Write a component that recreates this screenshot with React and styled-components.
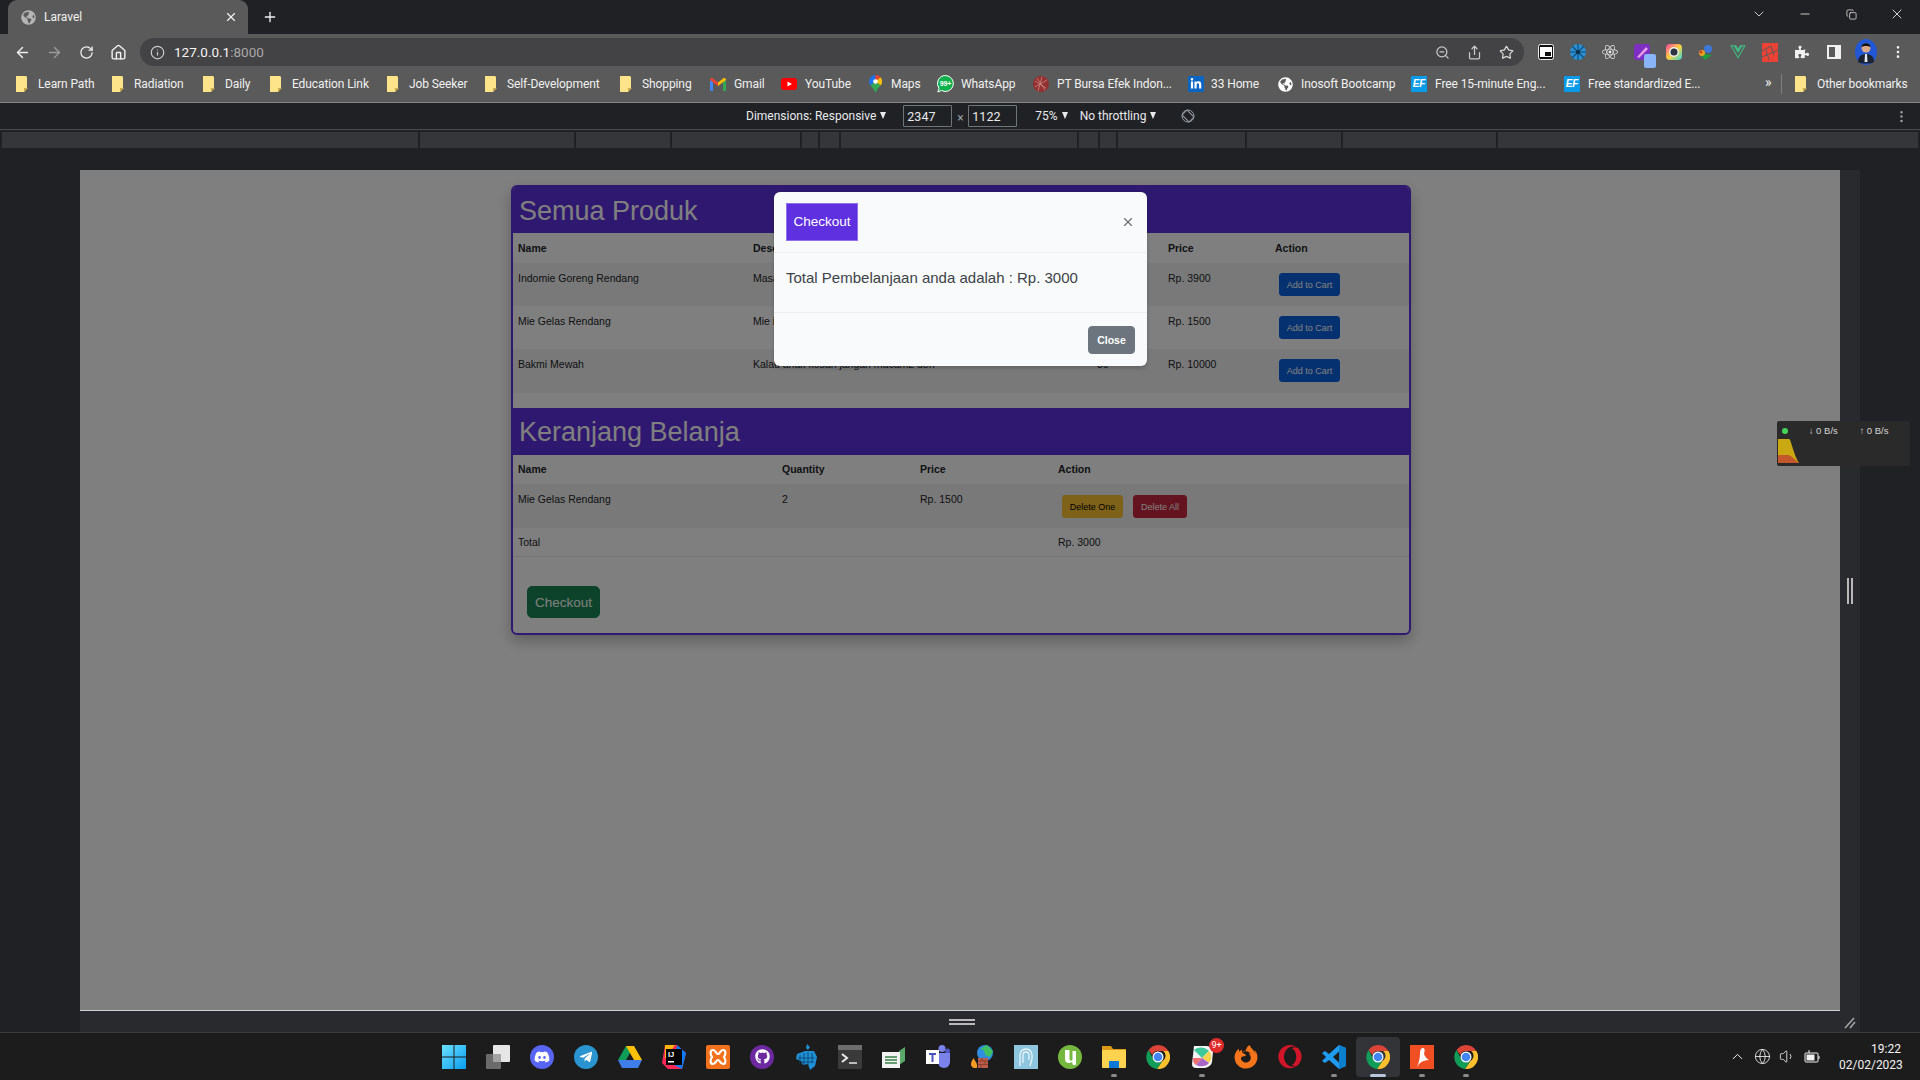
import React from 'react';
import styled, { createGlobalStyle } from 'styled-components';
import {
  FaDiscord, FaTelegramPlane, FaGithub, FaLinkedinIn,
  FaVuejs, FaFirefoxBrowser, FaOpera, FaReact, FaPuzzlePiece, FaGlobeAmericas,
} from 'react-icons/fa';
import {
  ArrowLeft, ArrowRight, RotateCw, Home, Info, ZoomOut, Share, Star, X, Plus,
  ChevronDown, ChevronUp, Minus, Copy, MoreVertical, Volume1, Globe,
} from 'lucide-react';

const GlobalStyle = createGlobalStyle`
  html, body { margin: 0; padding: 0; background: #202124; }
  * { box-sizing: border-box; }
`;

const Screen = styled.div`
  position: relative;
  width: 1920px;
  height: 1080px;
  overflow: hidden;
  display: flex;
  flex-direction: column;
  background: #202124;
  color: #e8eaed;
  font-family: Roboto, "Noto Sans", sans-serif;
  font-size: 12px;
`;

/* browser chrome */
const TabStrip = styled.div`
  height: 34px;
  display: flex;
  background: #202124;
  padding-left: 8px;
`;

const Tab = styled.div`
  width: 240px;
  display: flex;
  align-items: center;
  gap: 8px;
  padding: 0 10px 0 13px;
  background: #5a5a5a;
  border-radius: 9px 9px 0 0;
  color: #f1f1f1;
`;

const TabTitle = styled.span`
  flex: 1;
`;

const NewTab = styled.div`
  width: 44px;
  display: flex;
  align-items: center;
  justify-content: center;
  color: #f1f1f1;
`;

const WindowButtons = styled.div`
  margin-left: auto;
  display: flex;
  height: 28px;
`;

const WindowButton = styled.div`
  width: 46px;
  display: flex;
  align-items: center;
  justify-content: center;
  color: #f0f0f0;
`;

const Toolbar = styled.div`
  height: 32px;
  padding: 4px 6px 0 6px;
  display: flex;
  align-items: center;
  background: #5a5a5a;
`;

const ToolButton = styled.div`
  width: 32px;
  height: 28px;
  flex: none;
  display: flex;
  align-items: center;
  justify-content: center;
  color: ${(p) => p.$color || '#f1f1f1'};
`;

const DeviceMenu = styled(ToolButton)`
  margin-left: auto;
  margin-right: 3px;
`;

const AddressBar = styled.div`
  width: 1384px;
  height: 28px;
  margin: 0 6px 0 6px;
  padding: 0 2px 0 10px;
  flex: none;
  display: flex;
  align-items: center;
  background: #434244;
  border-radius: 14px;
`;

const Url = styled.span`
  flex: 1;
  margin-left: 9px;
  font-size: 13.5px;
  color: #f4f4f4;
  span { color: #a9a9a9; }
`;

const BookmarkBar = styled.div`
  height: 37px;
  padding-left: 16px;
  display: flex;
  align-items: center;
  background: #5a5a5a;
  border-bottom: 1px solid #858585;
  letter-spacing: -0.1px;
`;

const Bookmark = styled.div`
  width: ${(p) => p.$w}px;
  flex: none;
  display: flex;
  align-items: center;
  gap: ${(p) => p.$gap || 8}px;
  margin-left: ${(p) => p.$ml || 0}px;
  color: #f1f1f1;
  white-space: nowrap;
`;

const BookmarkIcon = styled.span`
  width: ${(p) => p.$w || 16}px;
  height: 16px;
  flex: none;
  display: flex;
  align-items: center;
  justify-content: center;
  font-size: ${(p) => p.$size || 14}px;
  border-radius: 1px;
  background: ${(p) => p.$bg || 'none'};
  color: #fff;
`;

const EfTile = styled.span`
  width: 16px;
  height: 16px;
  flex: none;
  background: #0a9be8;
  color: #fff;
  font: italic bold 10px "Liberation Sans", sans-serif;
  text-align: center;
  line-height: 16px;
`;

const MoreMarks = styled.div`
  margin-left: 3px;
  width: 18px;
  height: 20px;
  font-size: 14px;
  color: #eee;
  border-right: 1px solid #808080;
`;

const DeviceBar = styled.div`
  height: 27px;
  padding-left: 746px;
  display: flex;
  align-items: center;
  border-bottom: 1px solid #494c50;
  color: #e8eaed;
  white-space: nowrap;
`;

const Caret = styled.span`
  width: 0;
  height: 0;
  margin: 0 ${(p) => p.$after || 0}px 2px 4px;
  border-left: 3.5px solid transparent;
  border-right: 3.5px solid transparent;
  border-top: 7px solid #e8eaed;
`;

const SizeInput = styled.div`
  width: 49px;
  height: 22px;
  padding: 3px 0 0 3px;
  border: 1px solid #70757a;
  border-radius: 1px;
  font-size: 12.5px;
`;

const Times = styled.span`
  width: 16px;
  text-align: center;
  color: #9aa0a6;
  padding-top: 3px;
`;

const ZoomLabel = styled.span`
  margin-left: 18px;
`;

const MediaBar = styled.div`
  height: 40px;
  padding: 2px 2px 22px 2px;
  display: flex;
  gap: 2px;
`;

const MediaSegment = styled.div`
  flex: ${(p) => (p.$w ? `0 0 ${p.$w}px` : '1')};
  background: #35363a;
`;

/* emulated viewport */
const Stage = styled.div`
  height: 841px;
  padding-left: 80px;
  display: flex;
`;

const Viewport = styled.div`
  position: relative;
  width: 1760px;
  padding-top: 15px;
  background: #ffffff;
  font-family: "Liberation Sans", Arial, sans-serif;
  font-size: 10.5px;
  color: #212529;
`;

const Card = styled.div`
  width: 900px;
  height: 450px;
  margin-left: 431px;
  border: 2px solid #5e30e0;
  border-radius: 6px;
  box-shadow: 0 6px 14px rgba(0, 0, 0, 0.25);
  overflow: hidden;
`;

const SectionTitle = styled.h2`
  height: ${(p) => p.$h}px;
  margin: 0;
  padding: 2px 0 0 6px;
  display: flex;
  align-items: center;
  background: #5e30e0;
  color: #fff;
  font-size: 27px;
  font-weight: 400;
`;

const ProductList = styled.div`
  height: 175px;
`;

const Row = styled.div`
  display: grid;
  grid-template-columns: ${(p) => p.$cols};
  height: ${(p) => p.$h}px;
  padding-top: ${(p) => p.$pt}px;
  background: ${(p) => (p.$striped ? 'rgba(0, 0, 0, 0.05)' : 'transparent')};
  border-bottom: ${(p) => (p.$line ? '1px solid #e6e6e6' : 'none')};
`;

const Cell = styled.div`
  padding-left: 5px;
  white-space: nowrap;
  overflow: hidden;
  font-weight: ${(p) => (p.$head ? 700 : 400)};
`;

const ActionCell = styled.div`
  margin-top: ${(p) => p.$mt}px;
  padding-left: 9px;
  display: flex;
  gap: 10px;
`;

const SmallButton = styled.button`
  width: ${(p) => p.$w}px;
  height: 23px;
  padding: 0;
  border: 1px solid ${(p) => p.$bg};
  border-radius: 3px;
  background: ${(p) => p.$bg};
  color: ${(p) => p.$fg};
  font: 9px "Liberation Sans", Arial, sans-serif;
`;

const CheckoutButton = styled.button`
  width: 73px;
  height: 32px;
  margin: 29px 0 0 14px;
  padding: 0;
  border: 1px solid #198754;
  border-radius: 5px;
  background: #198754;
  color: #fff;
  font: 13.5px "Liberation Sans", Arial, sans-serif;
`;

/* dialog over the page */
const Backdrop = styled.div`
  position: absolute;
  inset: 0;
  padding-top: 22px;
  background: rgba(0, 0, 0, 0.5);
  border-bottom: 1px solid #d0d0d0;
`;

const Modal = styled.div`
  width: 373px;
  height: 174px;
  margin-left: 694px;
  display: flex;
  flex-direction: column;
  background: #f8fafc;
  border-radius: 6px;
  box-shadow: 0 2px 4px rgba(0, 0, 0, 0.2);
`;

const ModalHeader = styled.div`
  height: 61px;
  padding: 11px 12px 0 12px;
  display: flex;
  justify-content: space-between;
  border-bottom: 1px solid #eceef0;
`;

const ModalTitle = styled.div`
  width: 72px;
  height: 38px;
  padding-bottom: 2px;
  display: flex;
  align-items: center;
  justify-content: center;
  background: #5e30e0;
  border: 1px solid #8f70ea;
  color: #fff;
  font-size: 13.5px;
`;

const ModalClose = styled.div`
  margin-top: 12px;
  color: #6c6f73;
  line-height: 0;
`;

const ModalBody = styled.div`
  height: 60px;
  padding: 16px 12px 0 12px;
  border-bottom: 1px solid #eceef0;
  color: #3d4246;
  font-size: 15px;
`;

const ModalFooter = styled.div`
  padding: 13px 12px 0 0;
  display: flex;
  justify-content: flex-end;
`;

const CloseButton = styled.button`
  width: 47px;
  height: 28px;
  padding: 0;
  border: 1px solid #6c757d;
  border-radius: 4px;
  background: #6c757d;
  color: #fff;
  font: bold 10.5px "Liberation Sans", Arial, sans-serif;
`;

const Rail = styled.div`
  width: 20px;
  display: flex;
  align-items: center;
  justify-content: center;
  gap: 2px;
  background: #292a2d;
`;

const RailGrip = styled.span`
  width: 2px;
  height: 26px;
  background: #b9b9b9;
`;

const BottomStrip = styled.div`
  height: 21px;
  margin: 0 60px 0 80px;
  display: flex;
  align-items: center;
  justify-content: space-between;
  padding-left: 869px;
  background: #292a2d;
`;

const BottomGrip = styled.div`
  width: 26px;
  height: 6px;
  border-top: 2px solid #b9b9b9;
  border-bottom: 2px solid #b9b9b9;
`;

const CornerGrip = styled.svg`
  margin-right: 4px;
  margin-top: 2px;
`;

/* windows taskbar */
const Taskbar = styled.div`
  height: 48px;
  padding-left: 432px;
  display: flex;
  align-items: center;
  background: #1c1c1c;
  border-top: 1px solid #3b3b3b;
`;

const TaskItem = styled.div`
  position: relative;
  width: 44px;
  height: 40px;
  flex: none;
  display: flex;
  align-items: center;
  justify-content: center;
  background: ${(p) => (p.$active ? '#333437' : 'none')};
  border-radius: 4px;
  &::after {
    content: '';
    display: ${(p) => (p.$dot || p.$active ? 'block' : 'none')};
    position: absolute;
    left: 50%;
    bottom: 0;
    width: ${(p) => (p.$active ? 16 : 6)}px;
    height: 3px;
    margin-left: ${(p) => (p.$active ? -8 : -3)}px;
    border-radius: 2px;
    background: ${(p) => (p.$active ? '#b7c6dc' : '#8a8a8a')};
  }
`;

const TaskTile = styled.span`
  width: 24px;
  height: 24px;
  display: flex;
  align-items: center;
  justify-content: center;
  font-size: ${(p) => p.$size || 16}px;
  border-radius: 50%;
  background: ${(p) => p.$bg || 'none'};
  color: ${(p) => p.$color || '#fff'};
`;

const Badge = styled.span`
  position: absolute;
  top: 1px;
  right: 0;
  width: 15px;
  height: 15px;
  border-radius: 50%;
  background: #e02b2b;
  color: #fff;
  font-size: 9px;
  line-height: 15px;
  text-align: center;
`;

const Tray = styled.div`
  margin-left: auto;
  padding-right: 19px;
  display: flex;
  align-items: center;
  color: #f1f1f1;
`;

const TrayIcon = styled.span`
  width: 25px;
  display: flex;
  justify-content: center;
`;

const Clock = styled.div`
  margin-left: 14px;
  width: 62px;
  text-align: right;
  line-height: 16px;
  font-size: 12px;
`;

/* network meter floating over everything */
const NetMeter = styled.div`
  position: absolute;
  left: 1777px;
  top: 421px;
  width: 133px;
  height: 45px;
  background: #2a2a2a;
  border-radius: 2px;
  font-family: "Liberation Sans", sans-serif;
  font-size: 9.5px;
  color: #d6d6d6;
`;

const NetHead = styled.div`
  height: 18px;
  padding: 1px 0 0 5px;
  display: flex;
  align-items: center;
`;

const NetDot = styled.span`
  width: 6px;
  height: 6px;
  margin-right: 21px;
  border-radius: 50%;
  background: #45d35a;
`;

const NetRate = styled.span`
  width: 53px;
  display: flex;
  align-items: center;
  gap: 3px;
`;

const NetChartSvg = styled.svg`
  display: block;
  margin-left: 1px;
`;

const PenWrap = styled.span`
  position: relative;
  display: inline-flex;
`;

const PenTile = styled.svg`
  position: absolute;
  left: 10px;
  top: 10px;
`;

const MEDIA_WIDTHS = [416, 154, 94, 128, 16, 19, 236, 19, 16, 127, 94, 153, 0];

const PRODUCT_COLS = '235px 344px 71px 107px 1fr';
const CART_COLS = '264px 138px 138px 1fr';

const PRODUCTS = [
  { name: 'Indomie Goreng Rendang', desc: 'Masakan Indonesia', qty: 12, price: 'Rp. 3900', h: 43 },
  { name: 'Mie Gelas Rendang', desc: 'Mie instan', qty: 20, price: 'Rp. 1500', h: 43 },
  { name: 'Bakmi Mewah', desc: 'Kalau anak kosan jangan macam2 deh', qty: 30, price: 'Rp. 10000', h: 44 },
];

const BOOKMARKS = [
  { label: 'Learn Path', w: 96 },
  { label: 'Radiation', w: 91 },
  { label: 'Daily', w: 67 },
  { label: 'Education Link', w: 117 },
  { label: 'Job Seeker', w: 98 },
  { label: 'Self-Development', w: 135 },
  { label: 'Shopping', w: 90 },
];

const Folder = () => (
  <svg width="12" height="16" viewBox="0 0 12 16">
    <path d="M0 0h10l1 1v11l-3 4H0z" fill="#fde38a" />
    <path d="M8 16v-4h4z" fill="#c9a94e" />
  </svg>
);

const GmailIcon = () => (
  <svg width="16" height="13" viewBox="0 0 16 13">
    <path d="M0 13V2l3 2v9z" fill="#4285f4" />
    <path d="M13 13V4l3-2v11z" fill="#34a853" />
    <path d="M0 2c0-2 2-2.500 3-1.500L8 4.500 8 8 0 2z" fill="#ea4335" />
    <path d="M16 2c0-2-2-2.500-3-1.500L8 4.500 8 8l8-6z" fill="#fbbc04" />
  </svg>
);

const YoutubeIcon = () => (
  <svg width="16" height="12" viewBox="0 0 16 12">
    <rect width="16" height="12" rx="3" fill="#ff0000" />
    <path d="M6.500 3.500 11 6l-4.500 2.500z" fill="#fff" />
  </svg>
);

const MapsIcon = () => (
  <svg width="13" height="18" viewBox="0 0 13 18">
    <path d="M6.500 0A6.500 6.500 0 0 0 1.500 10.500L6.500 6.500z" fill="#1a73e8" />
    <path d="M6.500 0a6.500 6.500 0 0 1 5 2.300L6.500 6.500z" fill="#ea4335" />
    <path d="M11.500 2.300a6.500 6.500 0 0 1 0 8.200L6.500 6.500z" fill="#fbbc04" />
    <path d="M1.500 10.500 6.500 6.500l5 4C9.500 13 7.500 15 6.500 18 5.500 15 3.500 13 1.500 10.500z" fill="#34a853" />
    <circle cx="6.500" cy="6.500" r="2.300" fill="#fff" />
  </svg>
);

const WhatsappIcon = () => (
  <svg width="17" height="18" viewBox="0 0 17 18">
    <path d="M8.500 .5a8 8 0 1 1-4 15L.8 17l1.200-3.700A8 8 0 0 1 8.500 .5z" fill="#0fb14d" stroke="#fff" />
    <text x="8.500" y="11" textAnchor="middle" fontFamily="Liberation Sans" fontWeight="700" fontSize="7" fill="#fff">99+</text>
  </svg>
);

const BursaIcon = () => (
  <svg width="16" height="16" viewBox="0 0 16 16">
    <circle cx="8" cy="8" r="8" fill="#93302f" />
    <path d="M2 5l11 7M4 2l8 12M9 1 5 15M14 4 2 11" stroke="#c98a88" strokeWidth="0.8" />
  </svg>
);

const ChromeIcon = () => (
  <svg width="24" height="24" viewBox="0 0 24 24">
    <path d="M12 0a12 12 0 0 1 10.400 6H12a6 6 0 0 0-5.700 4L2.600 5A12 12 0 0 1 12 0z" fill="#db4437" />
    <path d="M22.400 6A12 12 0 0 1 11 24l5.300-8a6 6 0 0 0 .9-10z" fill="#fbc02d" />
    <path d="M2.600 5A12 12 0 0 0 11 24l5.300-8a6 6 0 0 1-9.700-3z" fill="#0f9d58" />
    <circle cx="12" cy="12" r="5.500" fill="#fff" />
    <circle cx="12" cy="12" r="4.300" fill="#4285f4" />
  </svg>
);

const WindowsIcon = () => (
  <svg width="24" height="24" viewBox="0 0 24 24">
    <defs>
      <linearGradient id="win" x1="0" y1="0" x2="1" y2="1">
        <stop offset="0" stopColor="#6ae0ff" />
        <stop offset="1" stopColor="#0a9cf0" />
      </linearGradient>
    </defs>
    <path d="M0 0h11.500v11.500H0zM12.500 0H24v11.500H12.500zM0 12.500h11.500V24H0zM12.500 12.500H24V24H12.500z" fill="url(#win)" />
  </svg>
);

const TaskViewIcon = () => (
  <svg width="24" height="24" viewBox="0 0 24 24">
    <rect x="0" y="9" width="15" height="15" rx="1" fill="#6b6b6b" />
    <rect x="7" y="0" width="17" height="17" rx="1" fill="#e6e6e6" />
    <rect x="7" y="9" width="8" height="8" fill="#a3a3a3" />
  </svg>
);

const DriveIcon = () => (
  <svg width="24" height="22" viewBox="0 0 24 22">
    <path d="M8 0h8L8 14H0z" fill="#0f9d58" />
    <path d="M16 0l8 14h-8L8 0z" fill="#ffc107" />
    <path d="M0 14l4 8h16l4-8z" fill="#3f7ee8" />
  </svg>
);

const IntellijIcon = () => (
  <svg width="24" height="24" viewBox="0 0 24 24">
    <path d="M3 0h12l9 8-4 16H6L0 18z" fill="#fe2857" />
    <path d="M15 0l9 8-4 16-8-4z" fill="#087cfa" />
    <path d="M3 0h10L3 14z" fill="#fdb60d" />
    <rect x="4" y="4" width="16" height="16" fill="#000" />
    <text x="6" y="12" fontFamily="Liberation Sans" fontWeight="700" fontSize="7.500" fill="#fff">IJ</text>
    <rect x="6" y="16" width="6" height="1.500" fill="#fff" />
  </svg>
);

const XamppIcon = () => (
  <svg width="24" height="24" viewBox="0 0 24 24">
    <rect width="24" height="24" rx="2" fill="#f2711c" />
    <path d="M7 5c3 0 3 4 5 4s2-4 5-4 3 4 1 7c2 3 2 7-1 7s-3-4-5-4-2 4-5 4-3-4-1-7c-2-3-2-7 1-7z" fill="none" stroke="#fff" strokeWidth="2.200" />
  </svg>
);

const DolphinIcon = () => (
  <svg width="24" height="26" viewBox="0 0 24 26">
    <path d="M13 0l3 3-2 3-2-2zM3 10l8-3 9 0 3 6-2 9-5 4-2-6-5 1-2-4-5-2z" fill="#1f8fd6" />
    <path d="M6 11v9M10 9v12M14 8v13M18 9v10M4 14h17M5 18h15" stroke="#0c3f66" strokeWidth="0.800" />
  </svg>
);

const TerminalIcon = () => (
  <svg width="24" height="24" viewBox="0 0 24 24">
    <rect width="24" height="24" rx="1" fill="#3a3a3a" />
    <rect width="24" height="5" fill="#6d6d6d" />
    <path d="M4 9l5 4-5 4" fill="none" stroke="#e8e8e8" strokeWidth="2" />
    <path d="M11 18h8" stroke="#e8e8e8" strokeWidth="1.500" />
  </svg>
);

const NotepadIcon = () => (
  <svg width="24" height="24" viewBox="0 0 24 24">
    <path d="M17 6l6-4v14l-6 4z" fill="#5aa86a" />
    <rect x="0" y="7" width="18" height="16" fill="#f2f2f2" />
    <path d="M3 12h12M3 15h12M3 18h12" stroke="#3a7f48" strokeWidth="1.500" />
  </svg>
);

const TeamsIcon = () => (
  <svg width="24" height="24" viewBox="0 0 24 24">
    <circle cx="16" cy="3.500" r="3.500" fill="#7b83eb" />
    <circle cx="21.500" cy="6" r="2.500" fill="#5059c9" />
    <path d="M12 8h12v9a6 6 0 0 1-12 0z" fill="#7b83eb" />
    <rect x="0" y="5" width="13" height="14" fill="#fff" />
    <path d="M3 8h7v2H7.500v7h-2v-7H3z" fill="#4b53bc" />
  </svg>
);

const FirewallIcon = () => (
  <svg width="24" height="24" viewBox="0 0 24 24">
    <circle cx="15" cy="8" r="8" fill="#2f8ee0" />
    <path d="M10 4c3 0 5 2 5 6l5 2 3-6-6-6z" fill="#3fbf60" />
    <rect x="8" y="13" width="10" height="10" fill="#b95c4a" />
    <path d="M8 16h10M8 19.500h10M12 13v3M15 16v3.500M11 19.500V23" stroke="#7d3327" strokeWidth="0.700" />
    <path d="M4 23c-4-1-4-6 0-10 0 3 4 4 3 10z" fill="#f59a23" />
  </svg>
);

const HeadIcon = () => (
  <svg width="24" height="24" viewBox="0 0 24 24">
    <rect width="24" height="24" fill="#8fc6df" />
    <path d="M6 21V10a6 6 0 0 1 12 0v4l-2 7M9 18V10a3 3 0 0 1 6 0v5" fill="none" stroke="#e9f5fa" strokeWidth="1.300" />
  </svg>
);

const TorrentIcon = () => (
  <svg width="24" height="24" viewBox="0 0 24 24">
    <circle cx="12" cy="12" r="12" fill="#76b83f" />
    <path d="M7 5v9c0 3 2 4 4 4 1 0 2-.300 3-1l1 3h3V6h-3.500v9c-1 1-3 1-3-1V5z" fill="#fff" />
  </svg>
);

const ExplorerIcon = () => (
  <svg width="24" height="24" viewBox="0 0 24 24">
    <path d="M0 1h9l2 3h13v4H0z" fill="#d99a16" />
    <rect y="5" width="24" height="18" rx="1" fill="#ffd34f" />
    <rect x="7" y="16" width="10" height="7" fill="#0a78d4" />
  </svg>
);

const PieIcon = () => (
  <svg width="24" height="24" viewBox="0 0 24 24">
    <path d="M4 1h13a6 6 0 0 1 6 6l-1 10c-1 4-5 6-9 6H6a4 4 0 0 1-4-4z" fill="#f4f4f4" />
    <path d="M12 13 4 5c3-3 10-4 15 1z" fill="#3cc89a" />
    <path d="M12 13l7-7c3 3 3 9 0 12z" fill="#f5d24f" />
    <path d="M12 13l7 5c-3 4-9 4-13 2z" fill="#a866c9" />
    <path d="M12 13l-6 7c-2-1-3-3-3-7z" fill="#ef6f72" />
  </svg>
);

const VscodeIcon = () => (
  <svg width="24" height="24" viewBox="0 0 24 24">
    <path d="M17 0l7 3v18l-7 3-10-9-4 3-3-2 4-4-4-4 3-2 4 3z" fill="#1f9cf0" />
    <path d="M17 0l7 3v18l-7 3z" fill="#0b7fcc" />
    <path d="M17 6.500v11L11 12z" fill="#1c1c1c" />
  </svg>
);

const AcrobatIcon = () => (
  <svg width="24" height="24" viewBox="0 0 24 24">
    <rect width="24" height="24" fill="#f04e23" />
    <path d="M7 22c2-5 3-9 3-14 0-3 1-5 3-5s2 3 1 6c1 3 3 5 5 6-4 0-7 1-10 4-1 2-2 3-2 3z" fill="#fff" />
  </svg>
);

const RotateIcon = () => (
  <svg width="14" height="14" viewBox="0 0 14 14" fill="none" stroke="#9aa0a6">
    <circle cx="7" cy="7" r="6" />
    <rect x="3.500" y="2" width="7" height="10" rx="1" transform="rotate(-45 7 7)" />
  </svg>
);

const Square = () => (
  <svg width="16" height="16" viewBox="0 0 16 16">
    <rect x="0.500" y="0.500" width="15" height="15" rx="2" fill="#111" stroke="#eee" />
    <rect x="2" y="3" width="12" height="10" fill="#fff" />
    <rect x="7" y="8" width="6" height="4" fill="#111" />
  </svg>
);

const Shutter = () => (
  <svg width="16" height="16" viewBox="0 0 16 16">
    <circle cx="8" cy="8" r="8" fill="#2b8fd1" />
    <path d="M8 0v5M16 8h-5M8 16v-5M0 8h5M2 2l4 4M14 2l-4 4M14 14l-4-4M2 14l4-4" stroke="#0d4e7c" strokeWidth="1.200" />
    <circle cx="8" cy="8" r="2.500" fill="#0d3250" />
  </svg>
);

const Pen = () => (
  <PenWrap>
    <svg width="16" height="16" viewBox="0 0 16 16">
      <rect width="16" height="16" rx="3" fill="#7d2fc4" />
      <path d="M3 13 12 3l2 2-9 9z" fill="#e79be9" />
    </svg>
    <PenTile width="12" height="14" viewBox="0 0 12 14">
      <rect width="12" height="14" rx="2" fill="#8ab4f8" />
    </PenTile>
  </PenWrap>
);

const Ring = () => (
  <svg width="16" height="16" viewBox="0 0 16 16">
    <defs>
      <linearGradient id="ring" x1="0" y1="0" x2="1" y2="1">
        <stop offset="0" stopColor="#ff3fa4" />
        <stop offset="0.500" stopColor="#ffd23c" />
        <stop offset="1" stopColor="#2fd6d9" />
      </linearGradient>
    </defs>
    <rect width="16" height="16" rx="4" fill="url(#ring)" />
    <circle cx="8" cy="8" r="5" fill="#eee" />
    <circle cx="8" cy="8" r="3.500" fill="#2d3340" />
  </svg>
);

const Orb = () => (
  <svg width="16" height="16" viewBox="0 0 16 16">
    <path d="M1 9l6 7 7-5z" fill="#1e9c3c" />
    <circle cx="10" cy="5" r="4" fill="#3f78d8" />
    <circle cx="4" cy="9" r="3" fill="#e6a51c" />
    <circle cx="3" cy="8" r="1.500" fill="#d63b2f" />
  </svg>
);

const Brick = () => (
  <svg width="16" height="19" viewBox="0 0 16 19">
    <rect width="16" height="19" fill="#ea4335" />
    <path d="M0 8l9-5M0 14l16-7M9 3l3 9M4 7l3 10" stroke="#5a5a5a" />
  </svg>
);

const Avatar = () => (
  <svg width="22" height="26" viewBox="0 0 22 26">
    <ellipse cx="11" cy="13" rx="11" ry="13" fill="#2257d6" />
    <circle cx="11" cy="9" r="4.500" fill="#d9a98a" />
    <path d="M6.500 8c0-5 9-5 9 0-2-1.500-7-1.500-9 0z" fill="#111" />
    <path d="M3 23c0-6 4-8 8-8s8 2 8 8c-2 2-14 2-16 0z" fill="#1b2333" />
    <path d="M10 15h2l.500 8h-3z" fill="#dfe6f0" />
  </svg>
);

const SidePanel = () => (
  <svg width="14" height="14" viewBox="0 0 14 14">
    <rect width="14" height="14" fill="#f1f1f1" />
    <rect x="2" y="2" width="6" height="10" fill="#5a5a5a" />
  </svg>
);

const NetChart = () => (
  <NetChartSvg width="22" height="24" viewBox="0 0 22 24">
    <path d="M0 0h11c2 0 4 14 10 24H0z" fill="#c9a812" />
    <path d="M0 16h10c3 0 6 4 11 8H0z" fill="#c2582c" />
  </NetChartSvg>
);

const App = () => {
  const taskIcons = [
    <WindowsIcon />,
    <TaskViewIcon />,
    <TaskTile $bg="#5865f2" $size={16}><FaDiscord /></TaskTile>,
    <TaskTile $bg="#2a94d0" $size={14}><FaTelegramPlane /></TaskTile>,
    <DriveIcon />,
    <IntellijIcon />,
    <XamppIcon />,
    <TaskTile $bg="#6d2aa0" $size={15}><FaGithub /></TaskTile>,
    <DolphinIcon />,
    <TerminalIcon />,
    <NotepadIcon />,
    <TeamsIcon />,
    <FirewallIcon />,
    <HeadIcon />,
    <TorrentIcon />,
    <ExplorerIcon />,
    <ChromeIcon />,
  ];

  return (
    <Screen>
      <GlobalStyle />

      <TabStrip>
        <Tab>
          <FaGlobeAmericas size={15} color="#b5b5b5" />
          <TabTitle>Laravel</TabTitle>
          <X size={14} />
        </Tab>
        <NewTab><Plus size={16} /></NewTab>
        <WindowButtons>
          <WindowButton><ChevronDown size={16} strokeWidth={1.2} /></WindowButton>
          <WindowButton><Minus size={14} strokeWidth={1.4} /></WindowButton>
          <WindowButton><Copy size={11} strokeWidth={1.6} /></WindowButton>
          <WindowButton><X size={16} strokeWidth={1.3} /></WindowButton>
        </WindowButtons>
      </TabStrip>

      <Toolbar>
        <ToolButton><ArrowLeft size={17} /></ToolButton>
        <ToolButton $color="#9a9a9a"><ArrowRight size={17} /></ToolButton>
        <ToolButton><RotateCw size={15} /></ToolButton>
        <ToolButton><Home size={17} /></ToolButton>
        <AddressBar>
          <Info size={15} color="#c9c9c9" />
          <Url>127.0.0.1<span>:8000</span></Url>
          <ToolButton $color="#c9c9c9"><ZoomOut size={15} /></ToolButton>
          <ToolButton $color="#c9c9c9"><Share size={15} /></ToolButton>
          <ToolButton $color="#d8d8d8"><Star size={15} /></ToolButton>
        </AddressBar>
        <ToolButton><Square /></ToolButton>
        <ToolButton><Shutter /></ToolButton>
        <ToolButton><FaReact size={16} color="#e8e8e8" /></ToolButton>
        <ToolButton><Pen /></ToolButton>
        <ToolButton><Ring /></ToolButton>
        <ToolButton><Orb /></ToolButton>
        <ToolButton $color="#42b883"><FaVuejs size={18} /></ToolButton>
        <ToolButton><Brick /></ToolButton>
        <ToolButton><FaPuzzlePiece size={14} /></ToolButton>
        <ToolButton><SidePanel /></ToolButton>
        <ToolButton><Avatar /></ToolButton>
        <ToolButton><MoreVertical size={16} /></ToolButton>
      </Toolbar>

      <BookmarkBar>
        {BOOKMARKS.map((b) => (
          <Bookmark key={b.label} $w={b.w} $gap={10}><Folder />{b.label}</Bookmark>
        ))}
        <Bookmark $w={71}><BookmarkIcon><GmailIcon /></BookmarkIcon>Gmail</Bookmark>
        <Bookmark $w={88}><BookmarkIcon><YoutubeIcon /></BookmarkIcon>YouTube</Bookmark>
        <Bookmark $w={68} $gap={9}><BookmarkIcon $w={13}><MapsIcon /></BookmarkIcon>Maps</Bookmark>
        <Bookmark $w={96} $gap={7}><BookmarkIcon $w={17}><WhatsappIcon /></BookmarkIcon>WhatsApp</Bookmark>
        <Bookmark $w={155}><BookmarkIcon><BursaIcon /></BookmarkIcon>PT Bursa Efek Indon...</Bookmark>
        <Bookmark $w={89} $gap={7}><BookmarkIcon $bg="#0a66c2" $size={12}><FaLinkedinIn /></BookmarkIcon>33 Home</Bookmark>
        <Bookmark $w={134}><BookmarkIcon $size={15}><FaGlobeAmericas /></BookmarkIcon>Inosoft Bootcamp</Bookmark>
        <Bookmark $w={153}><EfTile>EF</EfTile>Free 15-minute Eng...</Bookmark>
        <Bookmark $w={198}><EfTile>EF</EfTile>Free standardized E...</Bookmark>
        <MoreMarks>»</MoreMarks>
        <Bookmark $w={125} $ml={13} $gap={10}><Folder />Other bookmarks</Bookmark>
      </BookmarkBar>

      <DeviceBar>
        Dimensions: Responsive<Caret $after={17} />
        <SizeInput>2347</SizeInput>
        <Times>×</Times>
        <SizeInput>1122</SizeInput>
        <ZoomLabel>75%</ZoomLabel><Caret $after={12} />
        No throttling<Caret $after={25} />
        <RotateIcon />
        <DeviceMenu $color="#9aa0a6"><MoreVertical size={15} /></DeviceMenu>
      </DeviceBar>

      <MediaBar>
        {MEDIA_WIDTHS.map((w, i) => <MediaSegment key={i} $w={w} />)}
      </MediaBar>

      <Stage>
        <Viewport>
          <Card>
            <SectionTitle $h={46}>Semua Produk</SectionTitle>
            <ProductList>
              <Row $cols={PRODUCT_COLS} $h={30} $pt={9}>
                <Cell $head>Name</Cell><Cell $head>Description</Cell><Cell $head>Quantity</Cell><Cell $head>Price</Cell><Cell $head>Action</Cell>
              </Row>
              {PRODUCTS.map((p, i) => (
                <Row key={p.name} $cols={PRODUCT_COLS} $h={p.h} $pt={9} $striped={i !== 1}>
                  <Cell>{p.name}</Cell><Cell>{p.desc}</Cell><Cell>{p.qty}</Cell><Cell>{p.price}</Cell>
                  <ActionCell $mt={1}><SmallButton $w={61} $bg="#0c62e0" $fg="#fff">Add to Cart</SmallButton></ActionCell>
                </Row>
              ))}
            </ProductList>
            <SectionTitle $h={47}>Keranjang Belanja</SectionTitle>
            <Row $cols={CART_COLS} $h={29} $pt={8}>
              <Cell $head>Name</Cell><Cell $head>Quantity</Cell><Cell $head>Price</Cell><Cell $head>Action</Cell>
            </Row>
            <Row $cols={CART_COLS} $h={44} $pt={9} $striped>
              <Cell>Mie Gelas Rendang</Cell><Cell>2</Cell><Cell>Rp. 1500</Cell>
              <ActionCell $mt={2}>
                <SmallButton $w={61} $bg="#ffc532" $fg="#000">Delete One</SmallButton>
                <SmallButton $w={54} $bg="#c92840" $fg="#fff">Delete All</SmallButton>
              </ActionCell>
            </Row>
            <Row $cols={CART_COLS} $h={29} $pt={8} $line>
              <Cell>Total</Cell><Cell /><Cell /><Cell>Rp. 3000</Cell>
            </Row>
            <CheckoutButton>Checkout</CheckoutButton>
          </Card>

          <Backdrop>
            <Modal>
              <ModalHeader>
                <ModalTitle>Checkout</ModalTitle>
                <ModalClose><X size={14} /></ModalClose>
              </ModalHeader>
              <ModalBody>Total Pembelanjaan anda adalah : Rp. 3000</ModalBody>
              <ModalFooter><CloseButton>Close</CloseButton></ModalFooter>
            </Modal>
          </Backdrop>
        </Viewport>
        <Rail><RailGrip /><RailGrip /></Rail>
      </Stage>

      <BottomStrip>
        <BottomGrip />
        <CornerGrip width="12" height="12" viewBox="0 0 12 12" stroke="#a8a8a8" strokeWidth="1.500">
          <path d="M1 11 10 1M6 11l5-6" />
        </CornerGrip>
      </BottomStrip>

      <Taskbar>
        {taskIcons.map((icon, i) => (
          <TaskItem key={i} $dot={i === 15}>{icon}</TaskItem>
        ))}
        <TaskItem $dot><PieIcon /><Badge>9+</Badge></TaskItem>
        <TaskItem><TaskTile $color="#f5761a" $size={24}><FaFirefoxBrowser /></TaskTile></TaskItem>
        <TaskItem><TaskTile $color="#d2162a" $size={24}><FaOpera /></TaskTile></TaskItem>
        <TaskItem $dot><VscodeIcon /></TaskItem>
        <TaskItem $active><ChromeIcon /></TaskItem>
        <TaskItem $dot><AcrobatIcon /></TaskItem>
        <TaskItem $dot><ChromeIcon /></TaskItem>
        <Tray>
          <TrayIcon><ChevronUp size={17} strokeWidth={1.4} /></TrayIcon>
          <TrayIcon><Globe size={17} strokeWidth={1.2} /></TrayIcon>
          <TrayIcon><Volume1 size={17} strokeWidth={1.2} /></TrayIcon>
          <TrayIcon>
            <svg width="17" height="14" viewBox="0 0 17 14" fill="none" stroke="#f1f1f1">
              <rect x="1" y="3" width="13" height="9" rx="1" />
              <path d="M15 6v3" />
              <rect x="3" y="5" width="7" height="5" fill="#f1f1f1" />
              <path d="M5 0v3" />
            </svg>
          </TrayIcon>
          <Clock>19:22<br />02/02/2023</Clock>
        </Tray>
      </Taskbar>

      <NetMeter>
        <NetHead>
          <NetDot />
          <NetRate>↓ 0 B/s</NetRate>
          <NetRate>↑ 0 B/s</NetRate>
        </NetHead>
        <NetChart />
      </NetMeter>
    </Screen>
  );
};

export default App;
